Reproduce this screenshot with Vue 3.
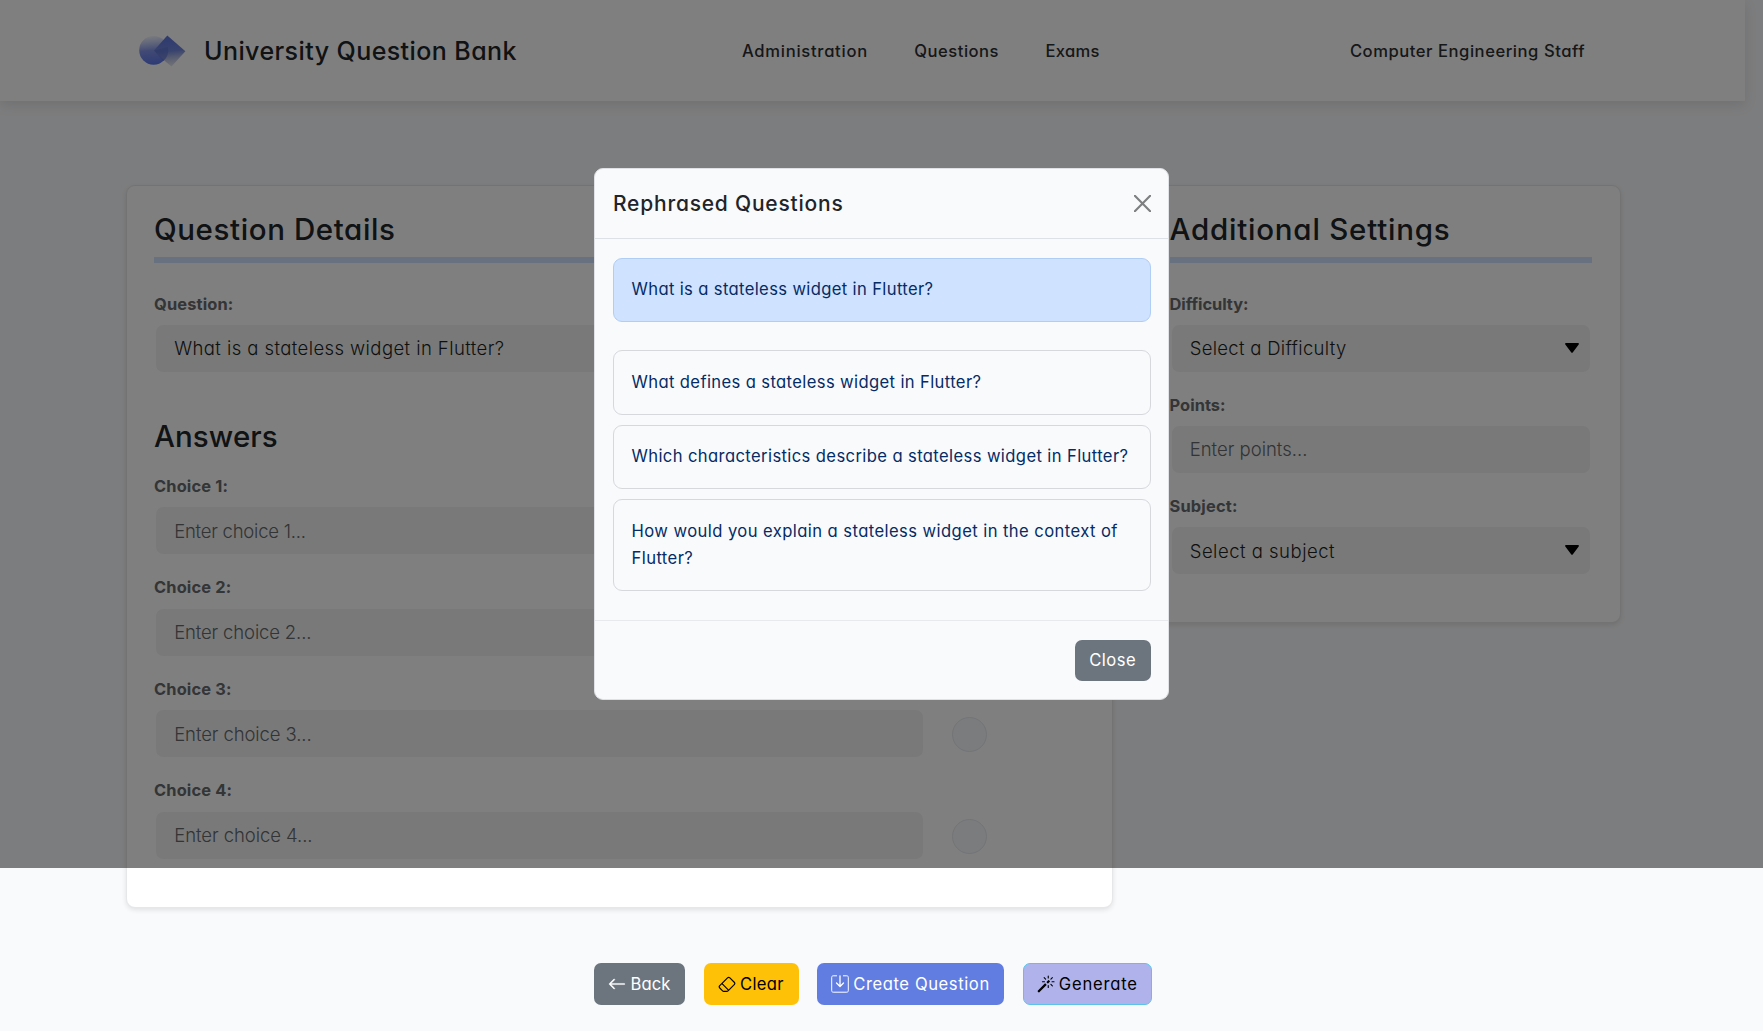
<script setup>
const navLinks = [
  { text: 'Administration', track: 0.72 },
  { text: 'Questions', track: 0.5 },
  { text: 'Exams', track: 0.25 },
]

const choices = [
  { n: 1, track: -0.24 },
  { n: 2, track: -0.15 },
  { n: 3, track: -0.1 },
  { n: 4, track: -0.06 },
]

const settings = [
  { label: 'Difficulty:', text: 'Select a Difficulty', select: true, labelTrack: -0.05, track: 0.3 },
  { label: 'Points:', text: 'Enter points...', select: false, labelTrack: 0.05, track: 0 },
  { label: 'Subject:', text: 'Select a subject', select: true, labelTrack: 0.2, track: 0.5 },
]

const rephrased = [
  { text: 'What defines a stateless widget in Flutter?', track: 0.377 },
  { text: 'Which characteristics describe a stateless widget in Flutter?', track: 0.388 },
  { text: 'How would you explain a stateless widget in the context of Flutter?', track: 0.426 },
]
</script>

<template>
  <div class="page">
    <header class="topbar">
      <svg class="logo" viewBox="0 0 47 34" width="47" height="34">
        <defs>
          <linearGradient id="disc" x1="0.4" y1="0" x2="0.5" y2="1">
            <stop offset="0" stop-color="#8ba0f0" stop-opacity="0.1" />
            <stop offset="0.5" stop-color="#6d82e6" stop-opacity="0.85" />
            <stop offset="1" stop-color="#5b74ea" />
          </linearGradient>
          <linearGradient id="kite" x1="0.5" y1="0.1" x2="0.6" y2="1">
            <stop offset="0" stop-color="#6078e0" />
            <stop offset="0.45" stop-color="#7286dc" />
            <stop offset="1" stop-color="#c9cdda" stop-opacity="0.5" />
          </linearGradient>
        </defs>
        <circle cx="14.6" cy="16.3" r="14.4" fill="url(#disc)" />
        <path d="M28.3 1.5 46.4 17.2 32.5 32.4 27 28 15 16.5z" fill="url(#kite)" />
        <path d="M15 16.5 28.8 13a14.4 14.4 0 0 1-4.400 14z" fill="#5a6dcb" opacity="0.5" />
      </svg>
      <span class="brand">University Question Bank</span>
      <nav class="nav">
        <span v-for="l in navLinks" :key="l.text" :style="{ letterSpacing: l.track + 'px' }">{{ l.text }}</span>
      </nav>
      <span class="staff">Computer Engineering Staff</span>
    </header>

    <main class="cards">
      <section class="card main-card">
        <h2 class="head details">Question Details</h2>
        <label class="label first">Question:</label>
        <div class="input filled">What is a stateless widget in Flutter?</div>
        <h2 class="answers">Answers</h2>
        <div v-for="c in choices" :key="c.n" class="choice">
          <label class="label">Choice {{ c.n }}:</label>
          <div class="choice-row">
            <div class="input narrow" :style="{ letterSpacing: c.track + 'px' }">Enter choice {{ c.n }}...</div>
            <i class="radio"></i>
          </div>
        </div>
      </section>

      <section class="card side-card">
        <h2 class="head extra">Additional Settings</h2>
        <div v-for="s in settings" :key="s.label" class="setting">
          <label class="label" :style="{ letterSpacing: s.labelTrack + 'px' }">{{ s.label }}</label>
          <div class="input" :class="{ filled: s.select }">
            <span :style="{ letterSpacing: s.track + 'px' }">{{ s.text }}</span>
            <svg v-if="s.select" class="caret" viewBox="0 0 14 10" width="14" height="10">
              <path d="M1 0h12c.9 0 1.200.9.700 1.500L7.900 9.300a1.200 1.200 0 0 1-1.800 0L.3 1.500C-.2.9.1 0 1 0z" />
            </svg>
          </div>
        </div>
      </section>
    </main>

    <div class="actions">
      <button class="btn back">
        <svg viewBox="0 0 16 16" width="18" height="18" fill="currentColor"><path fill-rule="evenodd" d="M15 8a.5.5 0 0 0-.5-.5H2.707l3.147-3.146a.5.5 0 1 0-.708-.708l-4 4a.5.5 0 0 0 0 .708l4 4a.5.5 0 0 0 .708-.708L2.707 8.500H14.500A.5.5 0 0 0 15 8" stroke="currentColor" stroke-width=".4" /></svg>
        <span>Back</span>
      </button>
      <button class="btn clear">
        <svg viewBox="0 0 16 16" width="18" height="18" fill="currentColor"><path d="M8.086 2.207a2 2 0 0 1 2.828 0l3.879 3.879a2 2 0 0 1 0 2.828l-5.500 5.500A2 2 0 0 1 7.879 15H5.120a2 2 0 0 1-1.414-.586l-2.500-2.500a2 2 0 0 1 0-2.828zm2.121.707a1 1 0 0 0-1.414 0L4.160 7.547l5.293 5.293 4.633-4.633a1 1 0 0 0 0-1.414zM8.746 13.547 3.453 8.254 1.914 9.793a1 1 0 0 0 0 1.414l2.500 2.500a1 1 0 0 0 .707.293H7.880a1 1 0 0 0 .707-.293z" /></svg>
        <span>Clear</span>
      </button>
      <button class="btn create">
        <svg viewBox="0 0 18 18" width="18" height="18" fill="none" stroke="currentColor"><path d="M6 .8H2.200C1.300.8.700 1.400.700 2.300v13.400c0 .9.600 1.500 1.500 1.500h13.600c.9 0 1.500-.6 1.500-1.500V2.300c0-.9-.6-1.500-1.500-1.500H12" stroke-width="1" /><path d="M9 .8v10.400M5.500 8 9 11.500 12.500 8" stroke-width="1.300" stroke-linecap="round" stroke-linejoin="round" /></svg>
        <span>Create Question</span>
      </button>
      <button class="btn generate">
        <svg viewBox="0 0 16 16" width="18" height="18" fill="currentColor"><path d="M9.500 2.672a.5.5 0 1 0 1 0V.843a.5.5 0 0 0-1 0zm4.500.035A.5.5 0 0 0 13.293 2L12 3.293a.5.5 0 1 0 .707.707zM7.293 4A.5.5 0 1 0 8 3.293L6.707 2A.5.5 0 0 0 6 2.707zm-.621 2.500a.5.5 0 1 0 0-1H4.843a.5.5 0 1 0 0 1zm8.485 0a.5.5 0 1 0 0-1h-1.829a.5.5 0 0 0 0 1zM13.293 10A.5.5 0 1 0 14 9.293L12.707 8a.5.5 0 1 0-.707.707zM9.500 11.157a.5.5 0 0 0 1 0V9.328a.5.5 0 0 0-1 0zm1.854-5.097a.5.5 0 0 0 0-.706l-.708-.708a.5.5 0 0 0-.707 0L8.646 5.940a.5.5 0 0 0 0 .707l.708.708a.5.5 0 0 0 .707 0l1.293-1.293Zm-3 3a.5.5 0 0 0 0-.706l-.708-.708a.5.5 0 0 0-.707 0L.646 13.940a.5.5 0 0 0 0 .707l.707.707a.5.5 0 0 0 .707 0z" /></svg>
        <span>Generate</span>
      </button>
    </div>

    <div class="backdrop">
      <div class="modal">
        <div class="modal-head">
          <span class="modal-title">Rephrased Questions</span>
          <svg viewBox="0 0 16 16" width="17" height="17"><path d="M.8.8 15.200 15.200M15.200.8.8 15.200" stroke="#7d7f80" stroke-width="2" stroke-linecap="round" /></svg>
        </div>
        <div class="modal-body">
          <div class="option selected">What is a stateless widget in Flutter?</div>
          <div v-for="r in rephrased" :key="r.text" class="option" :style="{ letterSpacing: r.track + 'px' }">{{ r.text }}</div>
        </div>
        <div class="modal-foot">
          <button class="btn dismiss"><span>Close</span></button>
        </div>
      </div>
    </div>
  </div>
</template>

<style>
body { background: #f9fafc; overflow: hidden; }
</style>

<style scoped>
* { box-sizing: border-box; }
.page {
  position: relative;
  width: 1763px;
  height: 1031px;
  overflow: hidden;
  background: #f9fafc;
  color: #212529;
  font-family: Inter, "Open Sans", sans-serif;
  font-feature-settings: "cv11";
  font-size: 16.6px;
}
h2 { margin: 0; font-weight: 500; font-size: 29.5px; line-height: 34px; }
.topbar {
  display: flex;
  align-items: center;
  width: 1745px;
  height: 101px;
  padding: 0 160px 0 139px;
  background: #fff;
  box-shadow: 0 4px 12px rgba(0, 0, 0, .1);
  font-weight: 480;
  white-space: nowrap;
}
.logo { flex: none; }
.brand { width: 538px; margin-left: 18px; font-size: 25px; letter-spacing: .42px; }
.nav { display: flex; flex: 1; gap: 46.500px; color: #2d2f31; }
.staff { letter-spacing: .54px; color: #2d2f31; }

.cards {
  display: flex;
  align-items: flex-start;
  gap: 28px;
  margin: 84px 0 0 125.500px;
}
.card {
  padding: 26px 27.500px 47.500px;
  background: #fff;
  border: 1px solid #e6e7e9;
  border-radius: 9px;
  box-shadow: 0 2px 5px rgba(0, 0, 0, .1);
}
.main-card { width: 987.500px; height: 722.500px; }
.side-card { width: 479.500px; height: 438px; }
.head { padding-bottom: 11px; border-bottom: 6px solid #cfe2ff; }
.details { letter-spacing: .6px; }
.extra { letter-spacing: .78px; }
.answers { margin-top: 47.500px; margin-bottom: 20.500px; letter-spacing: .1px; }
.label {
  display: block;
  margin-bottom: 8.300px;
  color: #666a6d;
  font-size: 16.400px;
  font-weight: 700;
  line-height: 25px;
  letter-spacing: .16px;
}
.first { margin-top: 28.500px; }
.input {
  display: flex;
  align-items: center;
  justify-content: space-between;
  height: 47px;
  margin: 0 2px;
  padding: 0 11px 0 18.200px;
  border-radius: 7px;
  background: #f3f3f3;
  color: #64686b;
  font-size: 18.500px;
  font-weight: 300;
}
.filled { color: #1d1f21; letter-spacing: .42px; }
.choice + .choice { margin-top: 21.200px; }
.choice-row { display: flex; align-items: center; }
.narrow { width: 766.500px; }
.radio {
  width: 35px;
  height: 35px;
  margin: 2px 0 0 27px;
  border: 1.500px solid #e6e9ee;
  border-radius: 50%;
  background: #f6f8fb;
}
.setting { margin-top: 20.900px; }
.head + .setting { margin-top: 28.500px; }
.caret { margin-top: -1px; fill: #000; }

.actions { display: flex; gap: 18.500px; margin: 55.500px 0 0 594px; }
.btn {
  display: flex;
  align-items: center;
  justify-content: center;
  gap: 4px;
  height: 41.500px;
  padding: 0;
  border: 1px solid transparent;
  border-radius: 7px;
  font: inherit;
  font-feature-settings: inherit;
  white-space: nowrap;
}
.back { width: 91px; background: #6c757d; color: #fff; letter-spacing: .13px; }
.clear { width: 95px; background: #ffc107; color: #000; letter-spacing: .32px; }
.create { width: 187px; background: #617de2; color: #fff; letter-spacing: .595px; }
.generate { width: 129.500px; background: #b0b3eb; border: 1.500px solid #5bc3ea; color: #000; letter-spacing: .8px; }

.backdrop {
  position: absolute;
  top: 0;
  left: 0;
  width: 1763px;
  height: 867.700px;
  padding-top: 168px;
  background: rgba(0, 0, 0, .5);
}
.modal {
  width: 575px;
  height: 531.500px;
  margin: 0 auto;
  border: 1px solid #dfe1e4;
  border-radius: 9px;
  background: #f9fafc;
}
.modal-head {
  display: flex;
  align-items: center;
  justify-content: space-between;
  height: 70px;
  padding: 0 17px 0 18px;
  border-bottom: 1px solid #dee2e6;
}
.modal-title { font-size: 21px; font-weight: 480; letter-spacing: .78px; }
.modal-body { height: 381px; padding: 18.500px 17.500px 0 18px; }
.option {
  margin-bottom: 10px;
  padding: 17.800px 17.500px;
  border: 1px solid #d6d8dc;
  border-radius: 9px;
  color: #052c65;
  line-height: 27px;
}
.selected { margin-bottom: 28px; border-color: #b0cdf5; background: #cfe2ff; letter-spacing: .36px; }
.modal-foot {
  display: flex;
  justify-content: flex-end;
  padding: 18.500px 17.500px 0;
  border-top: 1px solid #e7e9ec;
}
.dismiss { width: 75.500px; background: #6c757d; color: #fff; letter-spacing: .49px; }
</style>
